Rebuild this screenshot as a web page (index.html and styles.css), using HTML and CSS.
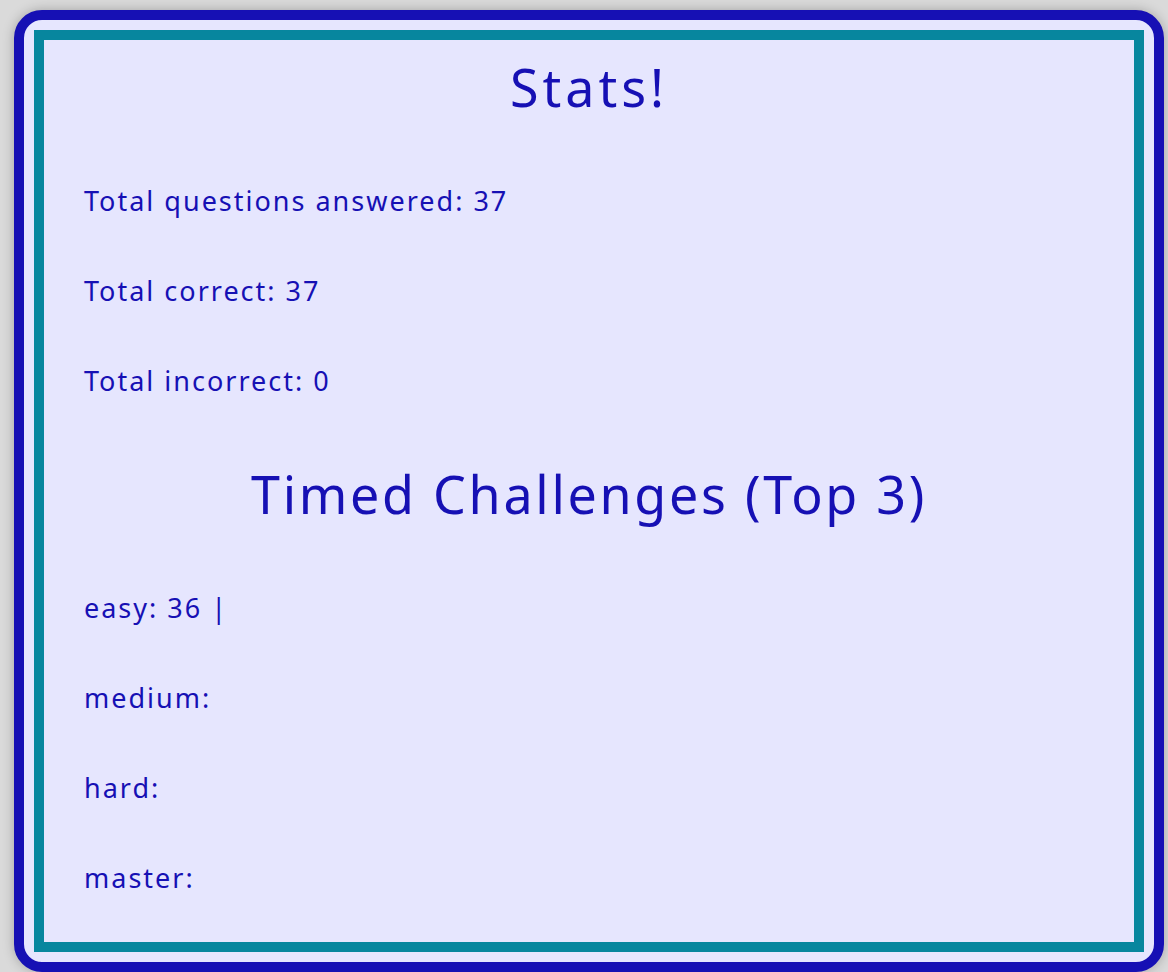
FILE: index.html
```html
<!DOCTYPE html>
<html lang="en">
<head>
<meta charset="utf-8">
<title>Stats</title>
<link rel="stylesheet" href="styles.css">
</head>
<body>
  <main class="card">
    <section class="panel">
      <h1 class="title title-stats">Stats!</h1>
      <div class="rows">
        <p class="row">Total questions answered: 37</p>
        <p class="row">Total correct: 37</p>
        <p class="row">Total incorrect: 0</p>
      </div>
      <h2 class="title title-timed">Timed Challenges (Top 3)</h2>
      <div class="rows">
        <p class="row">easy: 36 |</p>
        <p class="row">medium:</p>
        <p class="row">hard:</p>
        <p class="row">master:</p>
      </div>
    </section>
  </main>
</body>
</html>
```

FILE: styles.css
```css
html, body {
  margin: 0;
  padding: 0;
}
body {
  background: #dadada;
  padding: 10px 4px 0 14px;
  height: 972px;
  box-sizing: border-box;
  overflow: hidden;
  font-family: "Noto Sans", "Open Sans", sans-serif;
  color: #1610b4;
}
.card {
  width: 1150px;
  height: 962px;
  box-sizing: border-box;
  border: 10px solid #1610b4;
  border-radius: 28px;
  background: #e6e6fe;
  padding: 10px;
  box-shadow: 0 0 12px rgba(0, 0, 0, 0.25);
}
.panel {
  height: 100%;
  box-sizing: border-box;
  border: 10px solid #07869e;
  background: #e6e6fe;
  padding: 17px 40px 0 40px;
  display: flex;
  flex-direction: column;
}
.title {
  margin: 0;
  text-align: center;
  font-weight: 400;
  font-size: 52px;
  line-height: 60px;
  letter-spacing: 2.7px;
}
.title-stats {
  letter-spacing: 4px;
}
.title-timed {
  margin-top: 68px;
}
.rows {
  display: flex;
  flex-direction: column;
  gap: 60px;
  margin-top: 69px;
}
.title-timed + .rows {
  margin-top: 69px;
}
.row {
  margin: 0;
  font-size: 27px;
  line-height: 30px;
  letter-spacing: 2px;
}
```
